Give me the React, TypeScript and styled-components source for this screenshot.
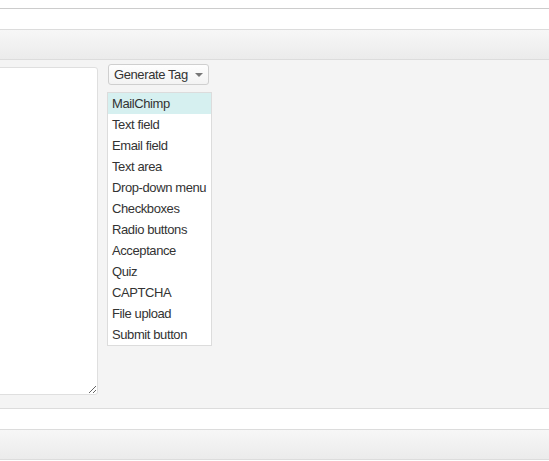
import React from 'react';
import styled, { createGlobalStyle } from 'styled-components';

const tags = [
  'MailChimp',
  'Text field',
  'Email field',
  'Text area',
  'Drop-down menu',
  'Checkboxes',
  'Radio buttons',
  'Acceptance',
  'Quiz',
  'CAPTCHA',
  'File upload',
  'Submit button',
];

function App() {
  return (
    <Page>
      <GlobalStyle />
      <TopGap />
      <WhiteStrip />
      <Bar />
      <Panel>
        <Editor defaultValue="" />
        <TagColumn>
          <GenerateButton type="button">
            Generate Tag
            <Caret />
          </GenerateButton>
          <TagList>
            {tags.map((tag, i) => (
              <TagItem key={tag} active={i === 0}>
                {tag}
              </TagItem>
            ))}
          </TagList>
        </TagColumn>
      </Panel>
      <WhiteStrip />
      <Bar />
    </Page>
  );
}

export default App;

const GlobalStyle = createGlobalStyle`
  html, body {
    margin: 0;
    padding: 0;
    background: #fff;
    overflow: hidden;
  }

  body {
    font-family: "Liberation Sans", Arial, sans-serif;
    color: #333;
  }
`;

const Page = styled.div`
  width: 549px;
  height: 461px;
  display: flex;
  flex-direction: column;
`;

const TopGap = styled.div`
  flex: none;
  height: 8px;
  border-bottom: 1px solid #cccccc;
`;

const WhiteStrip = styled.div`
  flex: none;
  height: 20px;
  background: #fff;
  border-bottom: 1px solid #dcdcdc;
`;

const Bar = styled.div`
  flex: none;
  height: 29px;
  background: linear-gradient(to bottom, #f7f7f7, #ebebeb);
  border-bottom: 1px solid #dcdcdc;
`;

const Panel = styled.div`
  flex: none;
  height: 344px;
  background: #f4f4f4;
  border-bottom: 1px solid #dcdcdc;
  display: flex;
  align-items: flex-start;
  padding-top: 4px;
  gap: 9px;
`;

const Editor = styled.textarea`
  margin: 3px 0 0 -20px;
  width: 118px;
  height: 328px;
  box-sizing: border-box;
  background: #fff;
  border: 1px solid #dfdfdf;
  border-radius: 3px;
  resize: both;
  outline: none;
  font: 13px "Liberation Sans", Arial, sans-serif;
`;

const TagColumn = styled.div`
  display: flex;
  flex-direction: column;
  align-items: flex-start;
`;

const GenerateButton = styled.button`
  margin-left: 1px;
  height: 21px;
  width: 101px;
  box-sizing: border-box;
  padding: 0 0 1px 5px;
  display: flex;
  align-items: center;
  gap: 7px;
  background: linear-gradient(to bottom, #fefefe, #f3f3f3);
  border: 1px solid #cfcfcf;
  border-radius: 3px;
  font: 13px "Liberation Sans", Arial, sans-serif;
  letter-spacing: -0.4px;
  color: #333;
`;

const Caret = styled.span`
  width: 0;
  height: 0;
  border-left: 4px solid transparent;
  border-right: 4px solid transparent;
  border-top: 4px solid #777;
  margin-top: 1px;
`;

const TagList = styled.ul`
  list-style: none;
  margin: 7px 0 0;
  padding: 0;
  width: 105px;
  box-sizing: border-box;
  background: #fff;
  border: 1px solid #dcdcdc;
`;

const TagItem = styled.li<{ active?: boolean }>`
  height: 21px;
  line-height: 21px;
  padding-left: 4px;
  font-size: 13px;
  letter-spacing: -0.4px;
  white-space: nowrap;
  color: #333;
  background: ${(props) => (props.active ? '#d6f0f0' : 'transparent')};
`;
